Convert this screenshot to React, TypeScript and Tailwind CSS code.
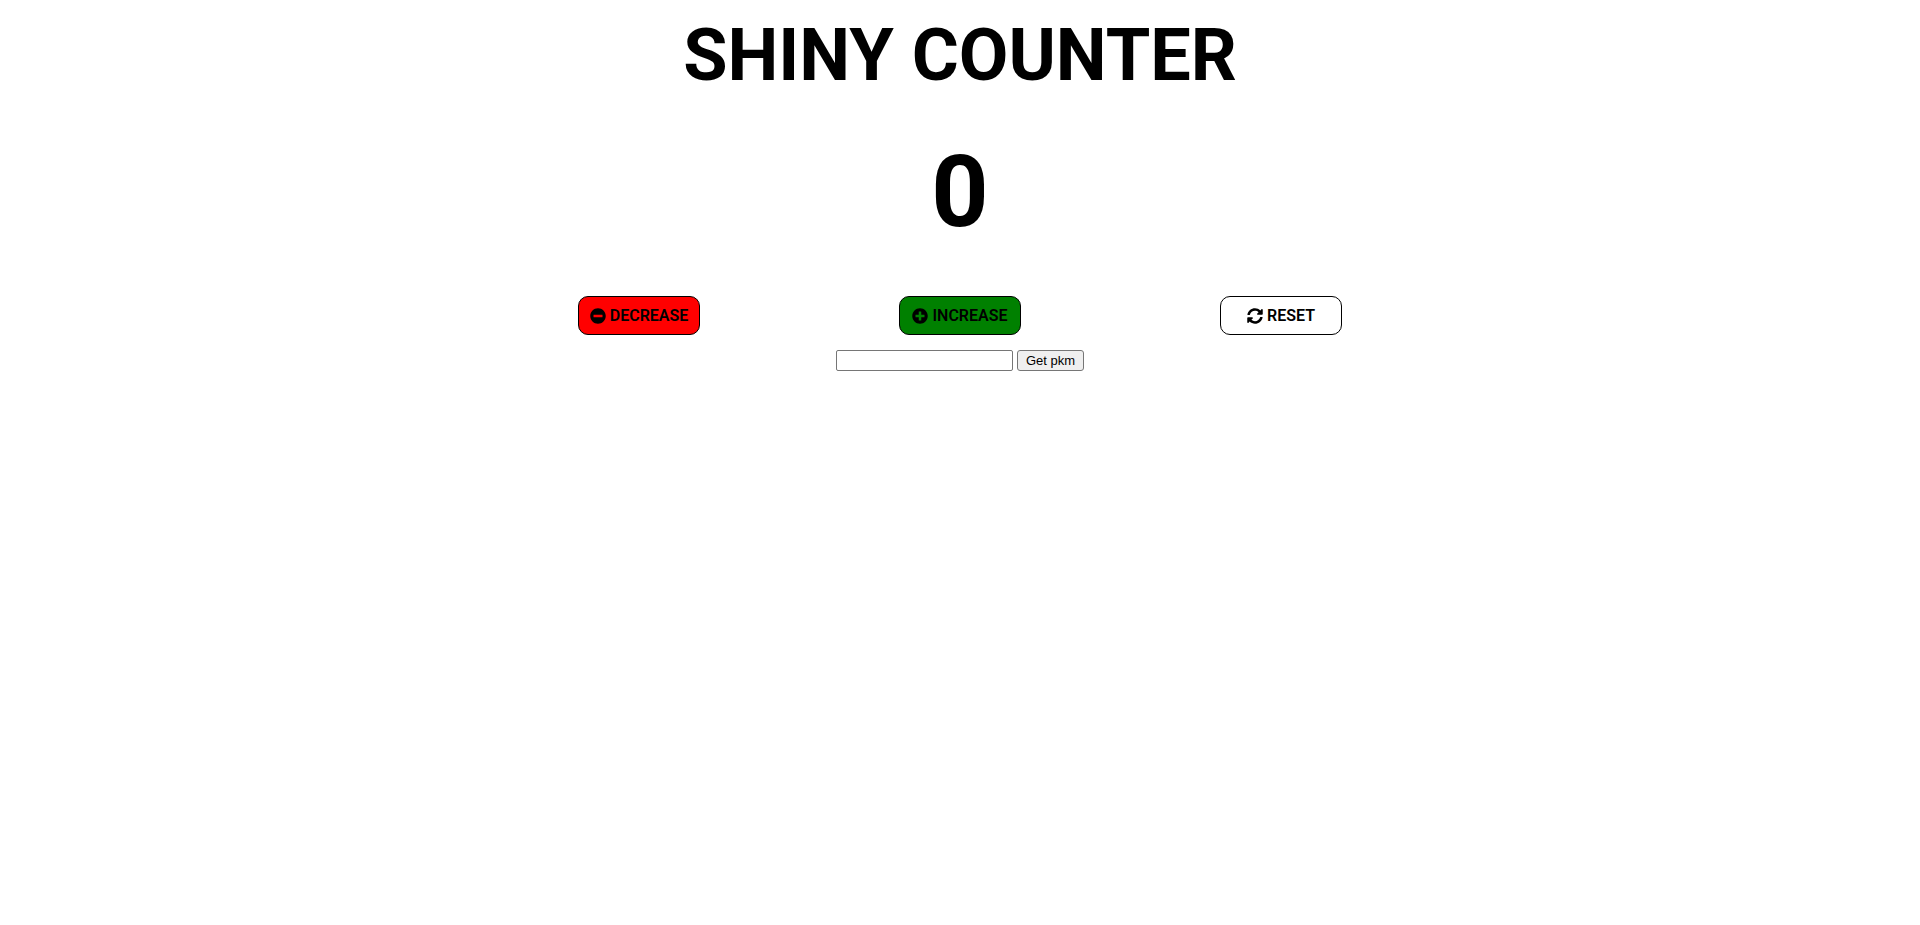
import { useState } from "react";
import type { ReactNode } from "react";
import { FaMinusCircle, FaPlusCircle, FaSyncAlt } from "react-icons/fa";

type CounterButtonProps = {
  className: string;
  onClick: () => void;
  icon: ReactNode;
  label: string;
};

function CounterButton({ className, onClick, icon, label }: CounterButtonProps) {
  return (
    <button
      type="button"
      onClick={onClick}
      className={`flex h-[39px] w-[122px] items-center justify-center gap-1 rounded-[10px] border border-black text-base leading-[19px] font-semibold whitespace-nowrap text-black ${className}`}
    >
      {icon}
      {label}
    </button>
  );
}

export default function App() {
  const [count, setCount] = useState(0);
  const [name, setName] = useState("");

  return (
    <main className="flex flex-col items-center bg-white font-['Roboto',sans-serif] text-black">
      <h1 className="pt-[14px] text-[72px] leading-[84px] font-bold">SHINY COUNTER</h1>
      <p className="py-[35px] text-[100px] leading-[118px] font-bold">{count}</p>
      <div className="mt-[10px] flex w-1/2 justify-center gap-[199px]">
        <CounterButton
          className="bg-[#ff0000]"
          onClick={() => setCount(Math.max(0, count - 1))}
          icon={<FaMinusCircle className="size-4" />}
          label="DECREASE"
        />
        <CounterButton
          className="bg-[#008000]"
          onClick={() => setCount(count + 1)}
          icon={<FaPlusCircle className="size-4" />}
          label="INCREASE"
        />
        <CounterButton
          className="bg-white"
          onClick={() => setCount(0)}
          icon={<FaSyncAlt className="size-4" />}
          label="RESET"
        />
      </div>
      <form
        className="mt-[15px] flex gap-1 font-['Liberation_Sans',sans-serif] text-[13px] leading-[15px]"
        onSubmit={(event) => event.preventDefault()}
      >
        <input
          type="text"
          aria-label="Pokémon name"
          value={name}
          onChange={(event) => setName(event.target.value)}
          className="h-[21px] w-[177px] rounded-[2px] border border-[#767676] px-1"
        />
        <button
          type="submit"
          className="h-[21px] w-[67px] rounded-[3px] border border-[#767676] bg-[#efefef] whitespace-nowrap"
        >
          Get pkm
        </button>
      </form>
    </main>
  );
}
